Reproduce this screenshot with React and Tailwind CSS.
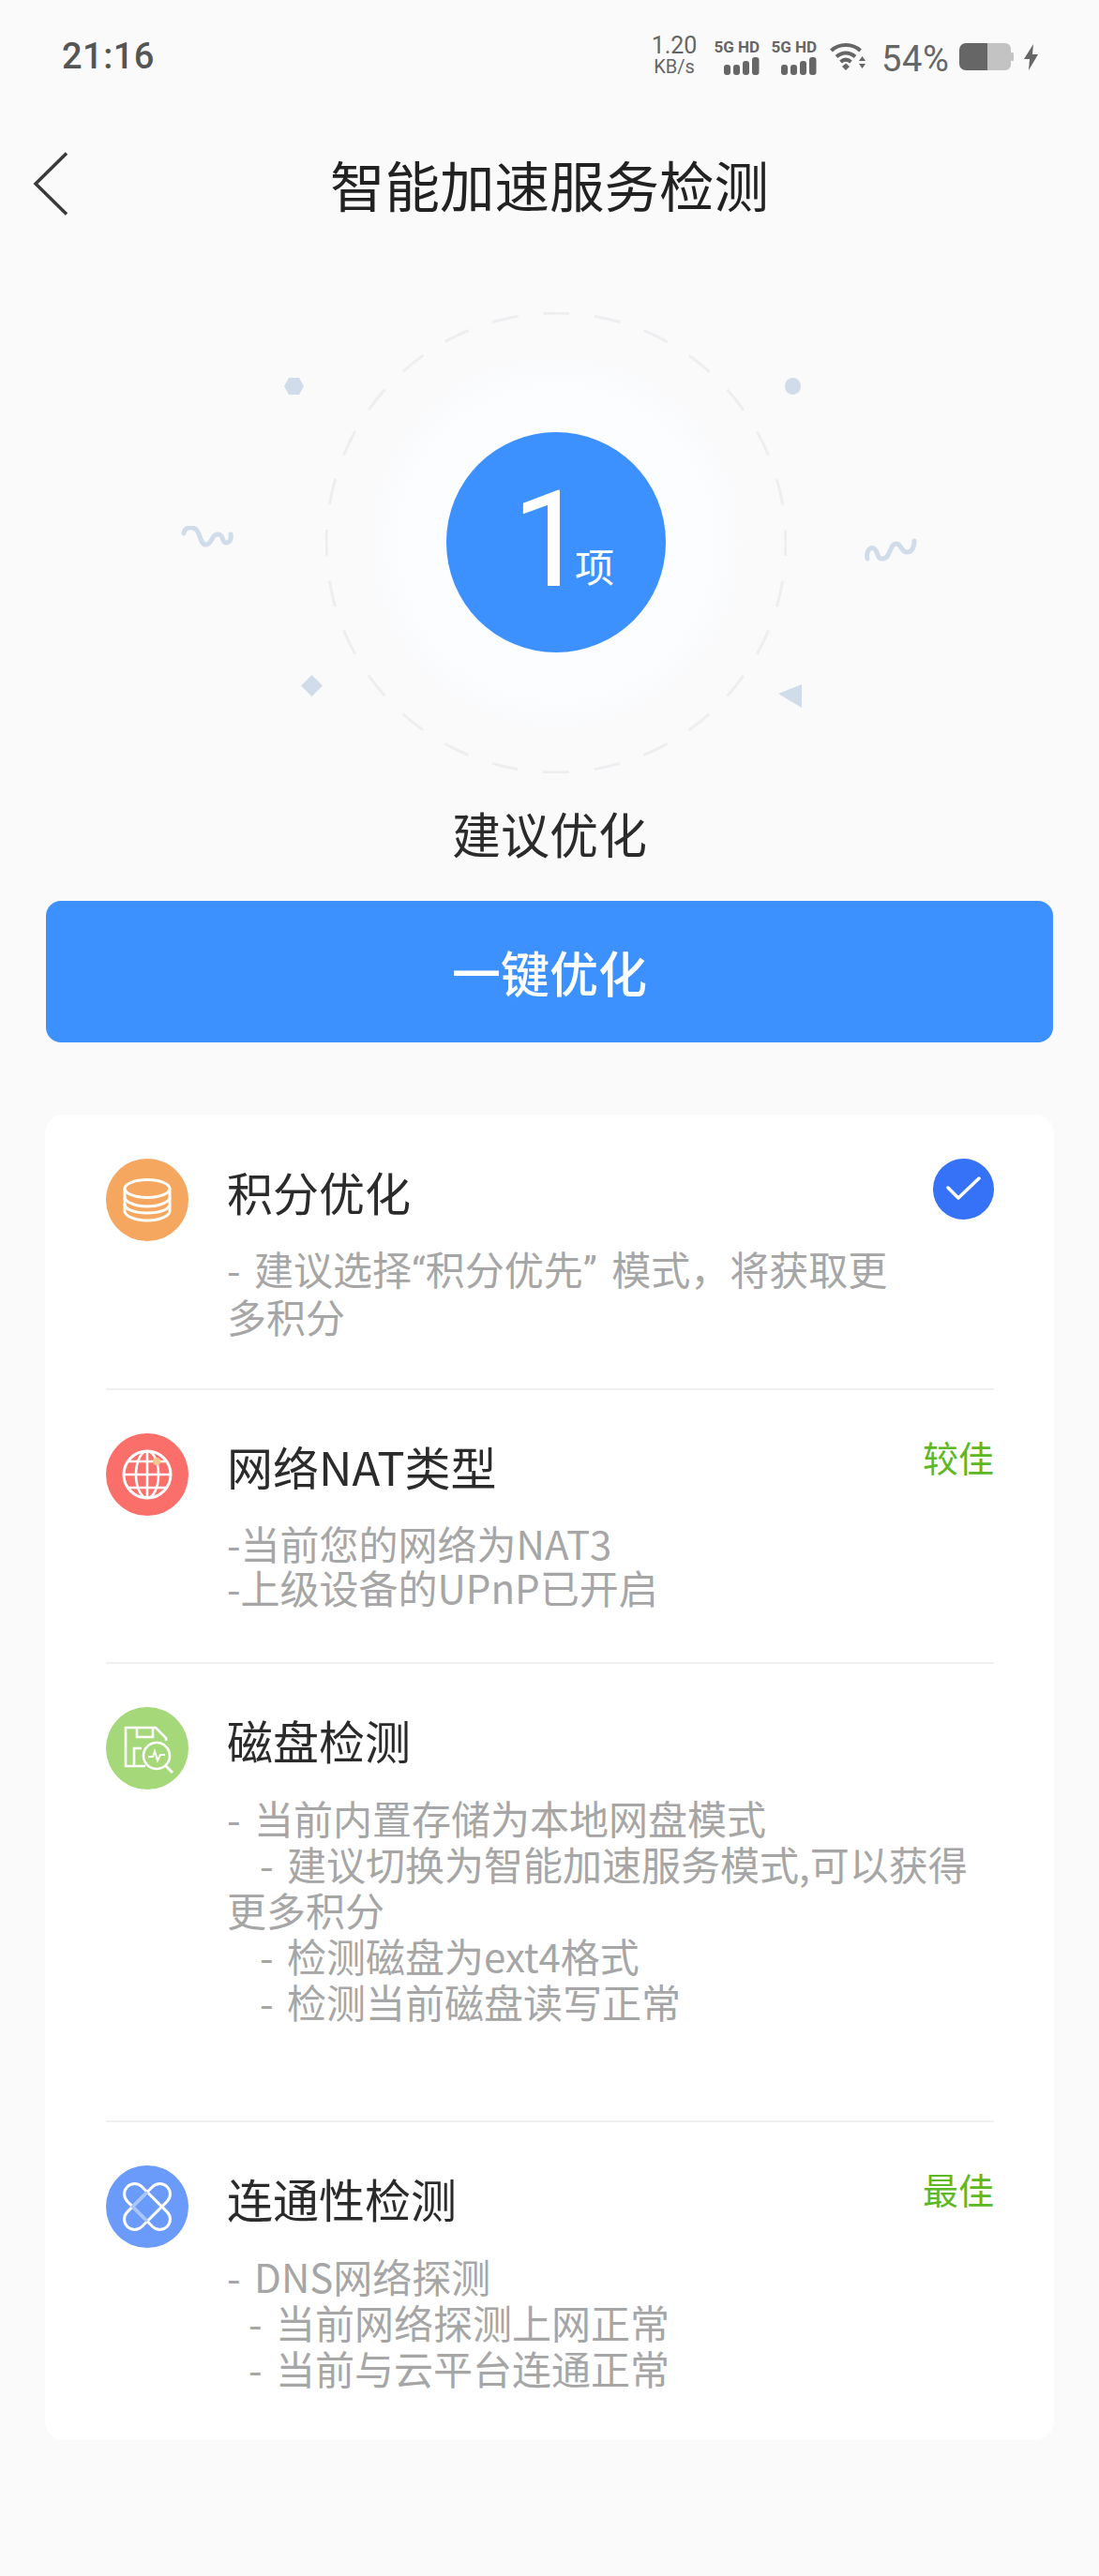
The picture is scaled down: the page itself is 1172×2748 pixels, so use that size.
import React from "react";

const cjk = "font-['Noto_Sans_CJK_SC','Noto_Sans',sans-serif]";

function SignalGroup() {
  return (
    <div className="flex w-[52px] flex-col items-end">
      <span className="mt-[-1px] whitespace-nowrap font-['Roboto',sans-serif] text-[17px] leading-[20px] font-bold text-[#666]">5G HD</span>
      <svg width="38" height="19" viewBox="0 0 38 19" className="mt-[1px]">
        <rect x="0" y="8" width="7" height="11" rx="3" fill="#666" />
        <rect x="10" y="8" width="7" height="11" rx="3" fill="#666" />
        <rect x="20" y="4" width="7" height="15" rx="3" fill="#666" />
        <rect x="30" y="0" width="7.5" height="19" rx="3" fill="#666" />
      </svg>
    </div>
  );
}

function StatusBar() {
  return (
    <div className="flex h-[88px] items-start justify-between pr-[65px] pl-[66px] font-['Roboto',sans-serif] text-[#666]">
      <span className="mt-[38px] text-[38px] leading-[44px] font-medium tracking-[0.5px] text-[#555]">21:16</span>
      <div className="mt-[37px] flex items-start">
        <div className="flex w-[48px] flex-col items-center">
          <span className="text-[25px] leading-[24px]">1.20</span>
          <span className="mt-[-1px] text-[20px] leading-[22px]">KB/s</span>
        </div>
        <div className="mt-[4px] ml-[15px] flex gap-[9px]">
          <SignalGroup />
          <SignalGroup />
        </div>
        <svg width="40" height="32" viewBox="0 0 40 32" className="mt-[7px] ml-[14px]" fill="none" stroke="#666" strokeWidth="4">
          <path d="M1.5 10C10 2 24 2 32.5 10" />
          <path d="M7 16.5C13 11 21 11 27 16.5" />
          <path d="M11.5 22C15 19 19 19 22.5 22" />
          <path d="M13 27L17 23.5L21 27L17 31Z" fill="#666" stroke="none" />
          <path d="M31 21L34.5 16L38 21Z" fill="#666" stroke="none" />
          <path d="M31 24L38 24L34.5 29Z" fill="#666" stroke="none" />
        </svg>
        <span className="mt-[5px] ml-[15px] w-[70px] text-[38px] leading-[42px] tracking-[0.6px] whitespace-nowrap">54%</span>
        <svg width="58" height="29" viewBox="0 0 58 29" className="mt-[9px] ml-[13px]">
          <path d="M7 0H30V29H7A7 7 0 0 1 0 22V7A7 7 0 0 1 7 0Z" fill="#666" />
          <path d="M30 0H49A6 6 0 0 1 55 6V23A6 6 0 0 1 49 29H30Z" fill="#c3c3c3" />
          <rect x="55" y="10" width="3" height="9" rx="1" fill="#c3c3c3" />
        </svg>
        <svg width="15" height="28" viewBox="0 0 15 28" className="mt-[10px] ml-[11px]">
          <path d="M10 0L0 16H6L5 28L15 11H9Z" fill="#666" />
        </svg>
      </div>
    </div>
  );
}

function Header() {
  return (
    <div className="relative mt-[55px] flex h-[110px] items-center justify-center">
      <svg width="38" height="68" viewBox="0 0 38 68" className="absolute top-[19px] left-[35px]" fill="none" stroke="#3a3a3a" strokeWidth="3.5">
        <path d="M36 1.5L3 34L36 66.5" />
      </svg>
      <h1 className={`${cjk} mt-[-4px] text-[58.5px] leading-[76px] font-normal text-[#222]`}>智能加速服务检测</h1>
    </div>
  );
}

function Hero() {
  return (
    <div className="relative mt-[80px] ml-[347px] h-[492px] w-[492px]">
      <svg width="492" height="492" viewBox="0 0 492 492" className="absolute inset-0" fill="none">
        <defs>
          <radialGradient id="heroGlow">
            <stop offset="0" stopColor="#fbfdff" />
            <stop offset="0.75" stopColor="#fbfdff" />
            <stop offset="1" stopColor="#fafafb" />
          </radialGradient>
        </defs>
        <circle cx="246" cy="246" r="205" fill="url(#heroGlow)" />
        <circle cx="246" cy="246" r="245" stroke="#eceef0" strokeWidth="3" strokeDasharray="28 26.97" strokeDashoffset="14" />
      </svg>
      {/* floating shapes round the ring */}
      <svg width="21" height="18" viewBox="0 0 21 18" className="absolute top-[70px] left-[-44px]">
        <path d="M5 0H16L21 9L16 18H5L0 9Z" fill="#d0dce9" />
      </svg>
      <div className="absolute top-[70px] left-[490px] h-[18px] w-[17px] rounded-full bg-[#d0dce9]" />
      <svg width="56" height="23" viewBox="0 0 56 23" className="absolute top-[228px] left-[-154px]" fill="none" stroke="#d0dce9" strokeWidth="5" strokeLinecap="round">
        <path d="M3 8C4 1 11 1 15 3C21 6 20 21 27 20C34 19 32 9 39 9C46 8 43 18 48 18C52 18 54 14 53 9" />
      </svg>
      <svg width="56" height="25" viewBox="0 0 56 25" className="absolute top-[241px] left-[575px]" fill="none" stroke="#d0dce9" strokeWidth="5" strokeLinecap="round">
        <path d="M3 22C1 13 7 8 11 12C15 16 13 23 20 22C28 21 27 5 34 6C40 7 39 15 45 15C51 15 53 9 53 3" />
      </svg>
      <svg width="23" height="23" viewBox="0 0 23 23" className="absolute top-[387px] left-[-26px]">
        <path d="M11.5 0L23 11.5L11.5 23L0 11.5Z" fill="#d0dce9" />
      </svg>
      <svg width="25" height="25" viewBox="0 0 25 25" className="absolute top-[397px] left-[483px]">
        <path d="M25 0L0 10L25 25Z" fill="#d0dce9" />
      </svg>
      <div className="absolute top-[128px] left-[129px] flex h-[235px] w-[234px] items-start rounded-full bg-[#3d91ff] text-white">
        <span className="mt-[31px] ml-[70px] w-[68px] font-['Roboto',sans-serif] text-[143px] leading-[168px] font-normal">1</span>
        <span className={`${cjk} mt-[112px] ml-[-1px] text-[42px] leading-[60px]`}>项</span>
      </div>
    </div>
  );
}

function CoinIcon() {
  return (
    <svg width="88" height="88" viewBox="0 0 88 88" fill="none" stroke="#fff" strokeWidth="3">
      <ellipse cx="44" cy="32" rx="24" ry="9.5" />
      <path d="M20 32V56C20 61 31 66 44 66C57 66 68 61 68 56V32" />
      <path d="M20 41C20 46 31 51 44 51C57 51 68 46 68 41" />
      <path d="M20 49C20 54 31 58 44 58C57 58 68 54 68 49" />
    </svg>
  );
}

function GlobeIcon() {
  return (
    <svg width="88" height="88" viewBox="0 0 88 88" fill="none" stroke="#fff" strokeWidth="2.6">
      <circle cx="44" cy="44" r="25" strokeWidth="3" />
      <ellipse cx="44" cy="44" rx="12" ry="25" />
      <path d="M44 19V69M19 44H69M24 30H64M24 58H64" />
      <circle cx="54" cy="30" r="4" fill="#f8c98e" stroke="none" />
    </svg>
  );
}

function DiskIcon() {
  return (
    <svg width="88" height="88" viewBox="0 0 88 88" fill="none" stroke="#fff" strokeWidth="2.6">
      <path d="M42 63H21V22H53L64 33V36" />
      <path d="M33 22V32H50V22" />
      <path d="M30 63V44H38" />
      <circle cx="54" cy="52" r="14" />
      <path d="M64 63L71 70" strokeWidth="3" />
      <path d="M45 53H50L52 47L55 57L58 51H63" strokeWidth="2" />
    </svg>
  );
}

function LinkIcon() {
  return (
    <svg width="88" height="88" viewBox="0 0 88 88" fill="none" stroke="#fff" strokeWidth="3">
      <rect x="33" y="14" width="22" height="60" rx="11" transform="rotate(-45 44 44)" />
      <rect x="33" y="14" width="22" height="60" rx="11" transform="rotate(45 44 44)" />
      <path d="M44 28.5L28.5 44L44 59.5" stroke="#a9c6ff" strokeWidth="3.5" />
    </svg>
  );
}

function CheckBadge() {
  return (
    <div className="flex h-[65px] w-[65px] shrink-0 items-center justify-center rounded-full bg-[#3572f8]">
      <svg width="38" height="28" viewBox="0 0 38 28" fill="none" stroke="#fff" strokeWidth="3.5" strokeLinecap="round" strokeLinejoin="round">
        <path d="M2 12L13 23L35 2" />
      </svg>
    </div>
  );
}

const rows = [
  {
    title: "积分优化",
    color: "bg-[#f5a75f]",
    icon: <CoinIcon />,
    right: <CheckBadge />,
    pad: "pt-[47px] pb-[54px]",
    descClass: "pr-[87px] leading-[47px]",
    lines: [
      {
        text: (
          <>
            - 建议选择<span className="font-['Roboto',sans-serif]">“</span>积分优先<span className="font-['Roboto',sans-serif]">” </span>模式，将获取更多积分
          </>
        ),
      },
    ],
  },
  {
    title: "网络NAT类型",
    color: "bg-[#fb6f6b]",
    icon: <GlobeIcon />,
    right: "较佳",
    pad: "pt-[46px] pb-[57px]",
    descClass: "leading-[47px]",
    lines: [{ text: "-当前您的网络为NAT3" }, { text: "-上级设备的UPnP已开启" }],
  },
  {
    title: "磁盘检测",
    color: "bg-[#a5d878]",
    icon: <DiskIcon />,
    pad: "pt-[46px] pb-[103px]",
    descClass: "leading-[49px]",
    lines: [
      { text: "- 当前内置存储为本地网盘模式" },
      { text: "- 建议切换为智能加速服务模式,可以获得更多积分", indent: "indent-[35px]" },
      { text: "- 检测磁盘为ext4格式", indent: "indent-[35px]" },
      { text: "- 检测当前磁盘读写正常", indent: "indent-[35px]" },
    ],
  },
  {
    title: "连通性检测",
    color: "bg-[#6a9bfb]",
    icon: <LinkIcon />,
    right: "最佳",
    pad: "pt-[46px] pb-[53px]",
    descClass: "leading-[49px]",
    lines: [
      { text: "- DNS网络探测" },
      { text: "- 当前网络探测上网正常", indent: "indent-[23px]" },
      { text: "- 当前与云平台连通正常", indent: "indent-[23px]" },
    ],
  },
];

function Row({ row, last }) {
  return (
    <div className={`flex gap-[41px] ${row.pad} ${last ? "" : "border-b-2 border-[#f0f0f0]"}`}>
      <div className={`flex h-[88px] w-[88px] shrink-0 items-center justify-center rounded-full ${row.color}`}>
        {row.icon}
      </div>
      <div className="min-w-0 flex-1">
        <div className="flex h-[76px] items-start justify-between">
          <span className="text-[49px] leading-[70px] text-[#2b2b2b]">{row.title}</span>
          {typeof row.right === "string" ? (
            <span className="text-[38px] leading-[50px] text-[#5cb923]">{row.right}</span>
          ) : (
            row.right
          )}
        </div>
        <div className={`mt-[17px] text-[42px] text-[#a6a6a6] [word-spacing:5px] ${row.descClass}`}>
          {row.lines.map((line, i) => (
            <p key={i} className={line.indent || ""}>{line.text}</p>
          ))}
        </div>
      </div>
    </div>
  );
}

export default function App() {
  return (
    <div className={`${cjk} h-[2748px] w-[1172px] overflow-hidden bg-[#fafafb]`}>
      <StatusBar />
      <Header />
      <Hero />
      <div className="mt-[32px] text-center text-[52px] leading-[64px] text-[#2b2b2b]">建议优化</div>

      <div className="mx-[49px] mt-[40px] flex h-[151px] items-center justify-center rounded-[16px] bg-[#3d91ff] text-[52px] font-medium text-white">
        一键优化
      </div>

      <div className="mt-[77px] mr-[48px] ml-[48px] rounded-[20px] bg-white pr-[64px] pl-[65px]">
        {rows.map((row, i) => (
          <Row key={row.title} row={row} last={i === rows.length - 1} />
        ))}
      </div>
    </div>
  );
}
